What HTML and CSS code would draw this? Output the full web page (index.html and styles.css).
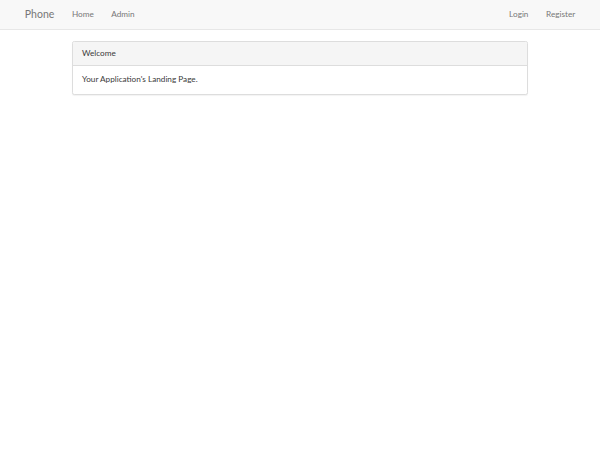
FILE: index.html
```html
<!DOCTYPE html>
<html lang="en">
<head>
<meta charset="utf-8">
<title>Phone</title>
<link rel="stylesheet" href="styles.css">
</head>
<body>
<nav class="navbar">
  <div class="container nav-container">
    <a class="brand" href="#">Phone</a>
    <ul class="nav">
      <li><a href="#">Home</a></li>
      <li><a href="#">Admin</a></li>
    </ul>
    <ul class="nav nav-right">
      <li><a href="#">Login</a></li>
      <li><a href="#">Register</a></li>
    </ul>
  </div>
</nav>
<main class="container">
  <div class="col">
    <section class="panel">
      <div class="panel-heading">Welcome</div>
      <div class="panel-body">Your Application's Landing Page.</div>
    </section>
  </div>
</main>
</body>
</html>
```
FILE: styles.css
```css
* { box-sizing: border-box; }
html, body { margin: 0; padding: 0; }
body {
  font-family: Lato, "Open Sans", "Liberation Sans", sans-serif;
  font-size: 8.2px;
  line-height: 11.7px;
  color: #3a3a3a;
  background: #fff;
}
a { text-decoration: none; }
.navbar {
  background: #f8f8f8;
  border-bottom: 1px solid #e7e7e7;
  margin-bottom: 11.4px;
}
.container {
  width: 568px;
  margin: 0 auto;
  padding: 0 8.8px;
}
.nav-container {
  display: flex;
  align-items: center;
  height: 29px;
}
.brand {
  font-size: 10.5px;
  line-height: 11.7px;
  padding: 8.6px 8.8px;
  margin-left: -8.8px;
  color: #777;
}
.nav {
  list-style: none;
  margin: 0;
  padding: 0;
  display: flex;
}
.nav a {
  display: block;
  padding: 8.6px 8.8px;
  color: #777;
}
.nav-right {
  margin-left: auto;
  margin-right: -8.8px;
}
.col {
  padding: 0 47.4px;
}
.panel {
  background: #fff;
  border: 1px solid #ddd;
  border-radius: 2.3px;
  box-shadow: 0 1px 1px rgba(0,0,0,.05);
  margin-bottom: 11.7px;
}
.panel-heading {
  background: #f5f5f5;
  color: #3a3a3a;
  border-bottom: 1px solid #ddd;
  padding: 5.6px 8.8px;
  border-radius: 2px 2px 0 0;
}
.panel-body {
  padding: 8.2px 8.8px;
}
```
